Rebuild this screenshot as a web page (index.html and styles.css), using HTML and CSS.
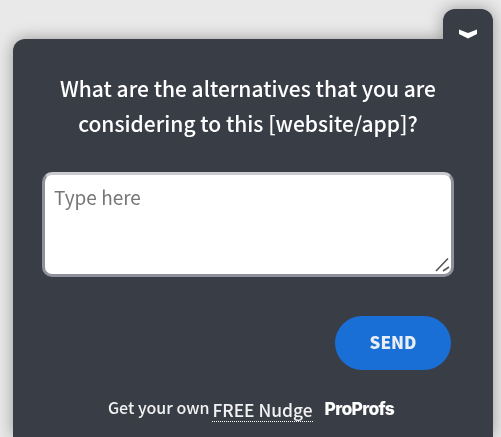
FILE: index.html
```html
<!DOCTYPE html>
<html lang="en">
<head>
    <meta charset="UTF-8">
    <meta name="viewport" content="width=device-width, initial-scale=1.0">
    <title>Nudge</title>
    <link rel="stylesheet" href="styles.css">
</head>
<body>
    <div class="nudge">
        <div class="toggle">
            <svg class="chevron" width="18" height="10" viewBox="0 0 18 10"><path d="M0 0.5 L9 4 L18 0.5 L18 5 L9 9.5 L0 5 Z" fill="#fff"/></svg>
        </div>
        <div class="card">
            <h1 class="question">What are the alternatives that you are considering to this [website/app]?</h1>
            <div class="answer">
                <textarea class="answer-input" placeholder="Type here"></textarea>
                <svg class="grip" width="16" height="16" viewBox="0 0 16 16"><path d="M2 14 L14 1.5 M9 14 L15 10" stroke="#555" stroke-width="1.6" fill="none"/></svg>
            </div>
            <div class="actions">
                <button class="send">SEND</button>
            </div>
            <div class="footer">
                <span class="footer-text">Get your own</span>
                <a class="footer-link">FREE Nudge</a>
                <span class="brand">ProProfs</span>
            </div>
        </div>
    </div>
</body>
</html>
```

FILE: styles.css
```css
* { box-sizing: border-box; margin: 0; padding: 0; }

html, body { height: 100%; overflow: hidden; }

body {
    font-family: "Noto Sans CJK SC", "Noto Sans", sans-serif;
    background: #e9e9e9;
    padding: 9px 8px 0 13px;
}

.nudge {
    display: flex;
    flex-direction: column;
    height: 428px;
    filter: drop-shadow(0 0 8px rgba(0, 0, 0, 0.35));
}

.toggle {
    align-self: flex-end;
    width: 50px;
    height: 30px;
    background: #393d46;
    border-radius: 12px 12px 0 0;
    display: flex;
    justify-content: center;
    padding-top: 20px;
}

.chevron { display: block; }

.card {
    flex: 1;
    background: #393d46;
    border-radius: 12px 0 0 0;
    padding: 32px 39px 0 29px;
}

.question {
    color: #fff;
    font-size: 21px;
    font-weight: 500;
    line-height: 35px;
    text-align: center;
    margin-bottom: 31px;
}

.answer {
    position: relative;
    display: flex;
}

.answer-input {
    width: 412px;
    height: 105px;
    border: 3px solid #8e919b;
    border-top-color: #c9cbd0;
    border-radius: 10px;
    background: #fff;
    padding: 8px 9px;
    font-family: inherit;
    font-size: 19px;
    line-height: 28px;
    outline: none;
    resize: none;
}

.answer-input::placeholder { color: #777; }

.grip {
    position: absolute;
    right: 4px;
    bottom: 4px;
}

.actions {
    display: flex;
    justify-content: flex-end;
    margin-top: 39px;
    padding-right: 3px;
}

.send {
    width: 116px;
    height: 54px;
    border: none;
    border-radius: 27px;
    background: #1a6fd6;
    color: #e9eef5;
    font-family: inherit;
    font-size: 17px;
    font-weight: 900;
    padding-bottom: 3px;
}

.footer {
    display: flex;
    align-items: flex-start;
    justify-content: center;
    margin-top: 27px;
    padding-left: 6px;
    color: #f2f2f2;
}

.footer-text {
    font-size: 16px;
    font-weight: 500;
    line-height: 20px;
}

.footer-link {
    font-size: 17.4px;
    font-weight: 500;
    margin: 1px 0 0 3px;
    line-height: 23px;
    border-bottom: 1px dotted #fff;
}

.brand {
    font-family: "Inter", sans-serif;
    font-size: 17.5px;
    font-weight: 800;
    letter-spacing: -0.7px;
    line-height: 24px;
    color: #fff;
    margin-left: 12px;
}
```
